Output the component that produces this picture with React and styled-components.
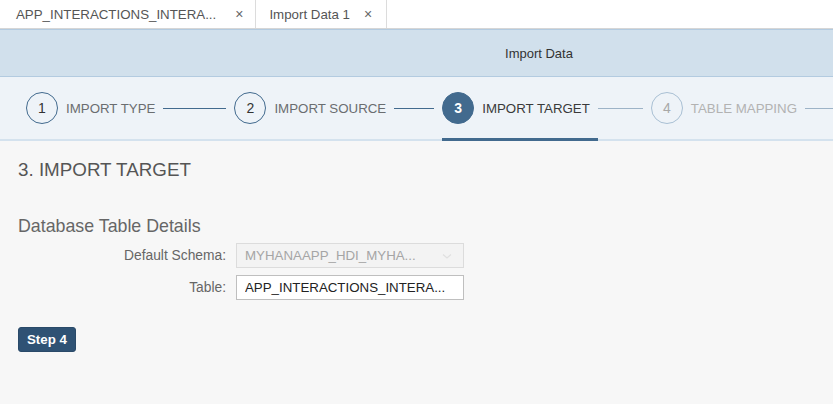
import React from 'react'
import styled, { createGlobalStyle } from 'styled-components'

const GlobalStyle = createGlobalStyle`
 body {
  margin: 0;
  overflow: hidden;
  background: #f7f7f7;
  font-family: "Liberation Sans", Arial, sans-serif;
 }
`

const Page = styled.div`
 width: 1078px;
 height: 404px;
 display: flex;
 flex-direction: column;
 background: #f7f7f7;
`

const TabBar = styled.div`
 height: 28px;
 display: flex;
 background: #fff;
 border-bottom: 1px solid #d6d6d6;
`

const Tab = styled.div`
 display: flex;
 align-items: center;
 padding: 0 ${p => p.right}px 0 ${p => p.left}px;
 border-right: 1px solid #dcdcdc;
 font-size: 13.3px;
 color: #555;
 span.close {
  font-size: 14px;
  color: #666;
  margin-left: ${p => p.gap}px;
 }
`

const Header = styled.div`
 height: 46px;
 display: flex;
 align-items: center;
 justify-content: center;
 background: #d1e0ec;
 border-top: 1px solid #b3cbe0;
 border-bottom: 1px solid #b3cbe0;
 font-size: 13px;
 color: #333;
`

const Wizard = styled.div`
 height: 62px;
 display: flex;
 align-items: stretch;
 padding-left: 26px;
 background: #eef3f8;
 border-bottom: 2px solid #d4e2ee;
`

const Step = styled.div`
 display: flex;
 align-items: center;
 gap: 8px;
 padding-right: 8px;
 margin-bottom: -2px;
 border-bottom: 3px solid ${p => (p.current ? '#426a8e' : 'transparent')};
 padding-top: 1px;
`

const Circle = styled.div`
 width: 30px;
 height: 30px;
 border-radius: 50%;
 display: flex;
 align-items: center;
 justify-content: center;
 font-size: 14px;
 border: 1px solid ${p => (p.state === 'todo' ? '#a9c0d4' : '#426a8e')};
 background: ${p => (p.state === 'current' ? '#426a8e' : 'transparent')};
 color: ${p => (p.state === 'current' ? '#fff' : p.state === 'todo' ? '#a8a8a8' : '#333')};
 font-weight: ${p => (p.state === 'current' ? 'bold' : 'normal')};
`

const StepLabel = styled.span`
 font-size: 13.3px;
 color: ${p => (p.state === 'todo' ? '#b2b2b2' : p.state === 'current' ? '#3a3a3a' : '#6a6d70')};
`

const Connector = styled.div`
 align-self: center;
 width: ${p => p.width}px;
 height: 1px;
 margin: 1px 8px 0 0;
 background: ${p => (p.light ? '#9db3c7' : '#426a8e')};
`

const Content = styled.div`
 flex: 1;
 padding: 18px 18px;
 border-left: 2px solid #eef3f8;
 margin-left: -2px;
`

const Title = styled.h2`
 margin: 0;
 font-size: 18.8px;
 font-weight: normal;
 color: #555;
`

const SectionTitle = styled.h3`
 margin: 35px 0 6px;
 font-size: 17.8px;
 font-weight: normal;
 color: #666;
`

const FormRow = styled.div`
 display: grid;
 grid-template-columns: 208px 228px;
 column-gap: 10px;
 align-items: center;
 margin-bottom: 7px;
`

const Label = styled.label`
 text-align: right;
 font-size: 13.8px;
 color: #666;
`

const Field = styled.div`
 height: 23px;
 display: flex;
 align-items: center;
 padding: 0 8px;
 font-size: 13.3px;
 background: ${p => (p.muted ? '#f3f3f3' : '#fff')};
 border: 1px solid ${p => (p.muted ? '#dcdcdc' : '#bfbfbf')};
 color: ${p => (p.muted ? '#a5a5a5' : '#222')};
`

const Value = styled.span`
 flex: 1;
 white-space: nowrap;
 overflow: hidden;
`

const Arrow = styled.svg`
 width: 12px;
 height: 12px;
 margin-right: 2px;
`

const Button = styled.button`
 margin-top: 20px;
 height: 25px;
 padding: 0 8px;
 background: #2f5274;
 border: 1px solid #2a4a69;
 border-radius: 3px;
 color: #fff;
 font-family: inherit;
 font-size: 13.3px;
 font-weight: bold;
`

const steps = [
 { n: 1, label: 'IMPORT TYPE', state: 'done', line: 63 },
 { n: 2, label: 'IMPORT SOURCE', state: 'done', line: 40 },
 { n: 3, label: 'IMPORT TARGET', state: 'current', line: 45, light: true },
 { n: 4, label: 'TABLE MAPPING', state: 'todo', line: 60, light: true },
]

const App = () => {
 return (
  <Page>
   <GlobalStyle />
   <TabBar>
    <Tab left={16} right={12} gap={19}>
     APP_INTERACTIONS_INTERA...<span className="close">×</span>
    </Tab>
    <Tab left={13} right={14} gap={14}>
     Import Data 1<span className="close">×</span>
    </Tab>
   </TabBar>
   <Header>Import Data</Header>
   <Wizard>
    {steps.map(s => (
     <React.Fragment key={s.n}>
      <Step current={s.state === 'current'}>
       <Circle state={s.state}>{s.n}</Circle>
       <StepLabel state={s.state}>{s.label}</StepLabel>
      </Step>
      <Connector width={s.line} light={s.light} />
     </React.Fragment>
    ))}
   </Wizard>
   <Content>
    <Title>3. IMPORT TARGET</Title>
    <SectionTitle>Database Table Details</SectionTitle>
    <FormRow>
     <Label>Default Schema:</Label>
     <Field muted>
      <Value>MYHANAAPP_HDI_MYHA...</Value>
      <Arrow viewBox="0 0 12 12">
       <path d="M2 4.5 L6 8 L10 4.5" fill="none" stroke="#e0e0e0" strokeWidth="1.2" />
      </Arrow>
     </Field>
    </FormRow>
    <FormRow>
     <Label>Table:</Label>
     <Field>
      <Value>APP_INTERACTIONS_INTERA...</Value>
     </Field>
    </FormRow>
    <Button>Step 4</Button>
   </Content>
  </Page>
 )
}

export default App
